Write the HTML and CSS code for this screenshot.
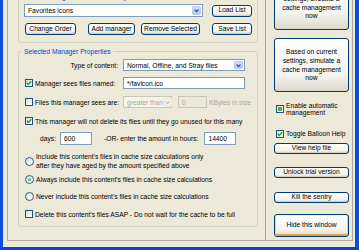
FILE: index.html
```html
<!DOCTYPE html>
<html lang="en">

<head>
    <meta charset="UTF-8">
    <meta name="viewport" content="width=device-width, initial-scale=1.0">
    <title>Cache Sentry</title>
    <link rel="stylesheet" href="styles.css">
</head>

<body>
    <div class="window">
        <div class="frame">
            <div class="left">
                <fieldset class="group group_top">
                    <legend>Cache managers, in the order they are run</legend>
                    <div class="row row_list">
                        <div class="combo combo_list">
                            <span class="combo_text">Favorites icons</span>
                            <span class="arrow"><svg width="7" height="7" viewBox="0 0 7 7"><path d="M1.5 2.5 L3.5 4.5 L5.5 2.5" /></svg></span>
                        </div>
                        <button class="btn btn_side btn_load">Load List</button>
                    </div>
                    <div class="row row_btns">
                        <button class="btn btn_order">Change Order</button>
                        <button class="btn btn_add">Add manager</button>
                        <button class="btn btn_remove">Remove Selected</button>
                        <button class="btn btn_side btn_save">Save List</button>
                    </div>
                </fieldset>

                <fieldset class="group group_props">
                    <legend>Selected Manager Properties</legend>
                    <div class="row row_type">
                        <span class="lbl_right">Type of content:</span>
                        <div class="combo combo_wide">
                            <span class="combo_text">Normal, Offline, and Stray files</span>
                            <span class="arrow"><svg width="7" height="7" viewBox="0 0 7 7"><path d="M1.5 2.5 L3.5 4.5 L5.5 2.5" /></svg></span>
                        </div>
                    </div>
                    <div class="row row_named">
                        <label class="check_lbl">
                            <span class="cb"><svg width="6" height="6" viewBox="0 0 6 6"><path d="M0.8 2.8 L2.3 4.4 L5.2 1.2" /></svg></span>
                            <span>Manager sees files named:</span>
                        </label>
                        <span class="textbox textbox_wide">*/favicon.ico</span>
                    </div>
                    <div class="row row_size">
                        <label class="check_lbl">
                            <span class="cb"></span>
                            <span>Files this manager sees are:</span>
                        </label>
                        <div class="combo combo_small disabled">
                            <span class="combo_text">greater than</span>
                            <span class="arrow"><svg width="7" height="7" viewBox="0 0 7 7"><path d="M1.5 2.5 L3.5 4.5 L5.5 2.5" /></svg></span>
                        </div>
                        <span class="textbox textbox_kb disabled">0</span>
                        <span class="dim">KBytes in size</span>
                    </div>
                    <div class="row row_unused">
                        <label class="check_lbl">
                            <span class="cb"><svg width="6" height="6" viewBox="0 0 6 6"><path d="M0.8 2.8 L2.3 4.4 L5.2 1.2" /></svg></span>
                            <span>This manager will not delete its files until they go unused for this many</span>
                        </label>
                    </div>
                    <div class="row row_days">
                        <span class="days_lbl">days:</span>
                        <span class="textbox textbox_num">600</span>
                        <span class="or_lbl">-OR- enter the amount in hours:</span>
                        <span class="textbox textbox_num textbox_hours">14400</span>
                    </div>
                    <div class="row row_radio row_radio_two">
                        <span class="rb"></span>
                        <span>Include this content's files in cache size calculations only<br>after they have aged by the amount specified above</span>
                    </div>
                    <div class="row row_radio row_always">
                        <span class="rb rb_on"></span>
                        <span>Always include this content's files in cache size calculations</span>
                    </div>
                    <div class="row row_radio row_never">
                        <span class="rb"></span>
                        <span>Never include this content's files in cache size calculations</span>
                    </div>
                    <div class="row row_asap">
                        <label class="check_lbl">
                            <span class="cb"></span>
                            <span>Delete this content's files ASAP - Do not wait for the cache to be full</span>
                        </label>
                    </div>
                </fieldset>
            </div>

            <div class="right">
                <button class="btn btn_big btn_execute">Based on current<br>settings, execute a<br>cache management<br>now</button>
                <button class="btn btn_big btn_simulate">Based on current<br>settings, simulate a<br>cache management<br>now</button>
                <label class="side_check side_auto">
                    <span class="cb cb_mixed"></span>
                    <span>Enable automatic management</span>
                </label>
                <label class="side_check side_balloon">
                    <span class="cb"><svg width="6" height="6" viewBox="0 0 6 6"><path d="M0.8 2.8 L2.3 4.4 L5.2 1.2" /></svg></span>
                    <span>Toggle Balloon Help</span>
                </label>
                <button class="btn btn_side_wide btn_help">View help file</button>
                <button class="btn btn_side_wide btn_unlock">Unlock trial version</button>
                <button class="btn btn_side_wide btn_kill">Kill the sentry</button>
                <button class="btn btn_default btn_hide">Hide this window</button>
            </div>
        </div>
    </div>
</body>

</html>
```

FILE: styles.css
```css
body {
    margin: 0;
    width: 359px;
    height: 250px;
    overflow: hidden;
    background-color: #ECE9D8;
    font-family: "Liberation Sans", Arial, sans-serif;
    font-size: 6.7px;
    line-height: 9px;
    color: #000;
}

.window {
    box-sizing: border-box;
    height: 250px;
    padding: 0 2px 6px 4px;
    border-left: 3px solid #0B4EDC;
    border-right: 4px solid #0B4EDC;
    border-bottom: 3px solid #0A43CF;
    background-color: #ECE9D8;
}

.frame {
    box-sizing: border-box;
    display: flex;
    height: 100%;
    border: 1px solid #ACA899;
    border-top: none;
}

.left {
    box-sizing: border-box;
    width: 257px;
    padding-left: 10px;
}

.right {
    box-sizing: border-box;
    display: flex;
    flex-direction: column;
    width: 87px;
    padding: 0 3px 0 8px;
    border-left: 1px solid #ACA899;
}

/* group boxes */

.group {
    box-sizing: border-box;
    width: 240px;
    min-width: 0;
    margin: 0;
    padding: 0 4px 0 5px;
    border: 1px solid #D0D0BF;
    border-radius: 3px;
}

.group legend {
    margin-left: -2px;
    padding: 0 2px;
    color: #0046D5;
    line-height: 9px;
}

.group_top {
    margin-top: -8px;
    padding-bottom: 7px;
}

.group_props {
    margin-top: 4px;
    padding-bottom: 6px;
}

.row {
    display: flex;
    align-items: center;
    white-space: nowrap;
}

.row_list {
    height: 13px;
    margin-top: 3px;
}

.row_btns {
    height: 12px;
    margin-top: 6px;
}

.row_type {
    height: 12px;
    margin-top: 3px;
}

.row_named {
    height: 12px;
    margin-top: 6px;
}

.row_size {
    height: 12px;
    margin-top: 7px;
}

.row_unused {
    height: 12px;
    margin-top: 7px;
}

.row_days {
    height: 13px;
    margin-top: 5px;
}

.row_radio_two {
    height: 18px;
    margin-top: 7px;
}

.row_always {
    height: 12px;
    margin-top: 3px;
}

.row_never {
    height: 12px;
    margin-top: 5px;
}

.row_asap {
    height: 12px;
    margin-top: 6px;
}

/* buttons */

.btn {
    box-sizing: border-box;
    display: flex;
    align-items: center;
    justify-content: center;
    height: 12px;
    padding: 0;
    font-family: inherit;
    font-size: inherit;
    line-height: 8.6px;
    color: #000;
    border: 1px solid #003C74;
    border-radius: 3px;
    background: linear-gradient(#FFFFFF, #F4F3EE 70%, #DCD8CC);
    box-shadow: inset 0 -1px 0 #D6D0C5;
}

.btn_side {
    width: 40px;
}

.btn_load {
    margin-left: 9px;
}

.btn_save {
    margin-left: 12px;
}

.btn_order {
    width: 51px;
    margin-left: 1px;
}

.btn_add {
    width: 47px;
    margin-left: 12px;
}

.btn_remove {
    width: 59px;
    margin-left: 6px;
}

.btn_big {
    flex-shrink: 0;
    width: 75px;
    height: 54px;
    padding: 1px 2px 0;
    line-height: 8.8px;
    text-align: center;
    white-space: nowrap;
}

.btn_execute {
    margin-top: -24px;
}

.btn_simulate {
    margin-top: 8px;
}

.btn_side_wide {
    flex-shrink: 0;
    width: 75px;
    height: 11px;
}

.btn_help {
    margin-top: 4px;
}

.btn_unlock {
    margin-top: 13px;
}

.btn_kill {
    margin-top: 14px;
}

.btn_default {
    flex-shrink: 0;
    width: 75px;
    height: 23px;
    margin-top: 11px;
    box-shadow: inset 0 1px 0 #FFF0CF, inset 1px 0 0 #F9D47D, inset -1px 0 0 #F9D47D, inset 0 -2px 0 #EBA23A;
}

/* combo boxes and text boxes */

.combo {
    box-sizing: border-box;
    display: flex;
    align-items: center;
    justify-content: space-between;
    height: 13px;
    padding: 1px;
    border: 1px solid #7F9DB9;
    background-color: #fff;
}

.combo_text {
    padding-left: 2px;
}

.combo_list {
    width: 179px;
}

.combo_wide {
    width: 122px;
    height: 12px;
}

.combo_small {
    width: 49px;
    height: 12px;
    margin-left: 0;
}

.arrow {
    box-sizing: border-box;
    display: flex;
    align-items: center;
    justify-content: center;
    width: 9px;
    height: 100%;
    border: 1px solid #B9CCF6;
    border-radius: 1px;
    background: linear-gradient(#D6E2FC, #B4C8F6);
}

.arrow path {
    fill: none;
    stroke: #4D6185;
    stroke-width: 1.3;
}

.combo.disabled {
    border-color: #C9C7BA;
    background-color: #F5F4EA;
    color: #ACA899;
}

.combo.disabled .arrow {
    border-color: #E8E6DA;
    background: #F3F2EC;
}

.combo.disabled .arrow path {
    stroke: #C9C7BA;
}

.textbox {
    box-sizing: border-box;
    display: flex;
    align-items: center;
    height: 12px;
    padding-left: 3px;
    border: 1px solid #7F9DB9;
    background-color: #fff;
}

.textbox_wide {
    width: 122px;
}

.textbox_kb {
    width: 29px;
    margin-left: 6px;
}

.textbox.disabled {
    border-color: #C9C7BA;
    background-color: #ECE9D8;
    color: #ACA899;
}

.textbox_num {
    width: 32px;
    height: 13px;
    margin-left: 4px;
}

.textbox_hours {
    margin-left: 6px;
}

.dim {
    margin-left: 2px;
    color: #ACA899;
}

.lbl_right {
    width: 94px;
    margin-right: 5px;
    text-align: right;
}

.check_lbl {
    display: flex;
    align-items: center;
    width: 99px;
}

.row_unused .check_lbl,
.row_asap .check_lbl {
    width: auto;
}

.days_lbl {
    margin-left: 16px;
}

.or_lbl {
    margin-left: 12px;
}

/* check boxes and radio buttons */

.cb {
    box-sizing: border-box;
    display: flex;
    align-items: center;
    justify-content: center;
    flex-shrink: 0;
    width: 8px;
    height: 8px;
    margin: 0 2px 0 1px;
    border: 1px solid #1C5180;
    background: linear-gradient(135deg, #DCDCD7, #FFFFFF);
}

.cb path {
    fill: none;
    stroke: #21A121;
    stroke-width: 1.4;
}

.cb_mixed::after {
    content: "";
    width: 4px;
    height: 4px;
    background-color: #4CB14A;
}

.rb {
    box-sizing: border-box;
    display: flex;
    align-items: center;
    justify-content: center;
    flex-shrink: 0;
    width: 9px;
    height: 9px;
    margin: 0 2px 0 1px;
    border: 1px solid #2F5E8F;
    border-radius: 50%;
    background: linear-gradient(135deg, #DCDCD7, #FFFFFF);
}

.rb_on::after {
    content: "";
    width: 3px;
    height: 3px;
    border-radius: 50%;
    background: radial-gradient(circle at 35% 35%, #62D95E, #21A121);
}

.side_check {
    display: flex;
    align-items: center;
    flex-shrink: 0;
    line-height: 7.5px;
}

.side_check .cb {
    margin-left: 2px;
}

.side_auto {
    height: 16px;
    margin-top: 9px;
}

.side_balloon {
    height: 10px;
    margin-top: 12px;
}
```
